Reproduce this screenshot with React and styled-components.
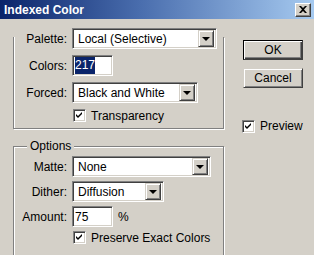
import React from "react";
import styled, { createGlobalStyle } from "styled-components";

const GlobalStyle = createGlobalStyle`
  html, body {
    margin: 0;
    padding: 0;
    background: #d4d0c8;
  }
`;

// 전체 창
const Window = styled.div`
  width: 314px;
  height: 255px;
  overflow: hidden;
  background: #d4d0c8;
  font-family: "Liberation Sans", Arial, sans-serif;
  font-size: 12px;
  color: #000;
`;

// 제목 표시줄
const TitleBar = styled.div`
  height: 19px;
  display: flex;
  align-items: center;
  justify-content: space-between;
  padding: 0 3px 0 4px;
  box-sizing: border-box;
  background: linear-gradient(to right, #0a246a 0%, #4a6eae 45%, #a6caf0 100%);
  color: #fff;
  font-weight: bold;
  font-size: 12px;
`;

const CloseButton = styled.div`
  width: 16px;
  height: 14px;
  box-sizing: border-box;
  background: #d4d0c8;
  border-top: 1px solid #fff;
  border-left: 1px solid #fff;
  border-right: 1px solid #404040;
  border-bottom: 1px solid #404040;
  box-shadow: inset -1px -1px 0 #808080;
  display: flex;
  align-items: center;
  justify-content: center;
`;

const Body = styled.div`
  display: flex;
  padding: 9px 0 0 13px;
`;

const LeftColumn = styled.div`
  width: 212px;
  display: flex;
  flex-direction: column;
  gap: 8px;
`;

// 그룹 상자 (테두리는 가상 요소로)
const Group = styled.div`
  position: relative;
  padding: ${(p) => p.$pad};

  &::before {
    content: "";
    position: absolute;
    top: ${(p) => p.$frameTop}px;
    left: 0;
    right: 1px;
    bottom: 1px;
    border: 1px solid #808080;
    border-top: ${(p) => (p.$noTop ? "none" : "1px solid #808080")};
    box-shadow: 1px 1px 0 #fff,
      inset 1px ${(p) => (p.$noTop ? "0" : "1px")} 0 #fff;
    pointer-events: none;
  }
`;

const Legend = styled.span`
  position: absolute;
  top: 0;
  left: 14px;
  padding: 0 3px;
  line-height: 16px;
  background: #d4d0c8;
  z-index: 1;
`;

const Form = styled.div`
  position: relative;
  display: grid;
  grid-template-columns: 54px auto;
  column-gap: 5px;
  row-gap: ${(p) => p.$gap}px;
  align-items: center;
`;

const Label = styled.label`
  text-align: right;
  white-space: nowrap;
`;

const Field = styled.div`
  display: flex;
  align-items: center;
  gap: 5px;
`;

// 움푹 들어간 상자
const Sunken = styled.div`
  width: ${(p) => p.$w}px;
  height: 21px;
  box-sizing: border-box;
  background: #fff;
  border-top: 1px solid #808080;
  border-left: 1px solid #808080;
  border-right: 1px solid #fff;
  border-bottom: 1px solid #fff;
  box-shadow: inset 1px 1px 0 #404040, inset -1px -1px 0 #d4d0c8;
  display: flex;
  align-items: center;
  padding: 2px;
`;

const SelectText = styled.span`
  flex: 1;
  padding-left: ${(p) => (p.$input ? 0 : 3)}px;
  white-space: nowrap;
  overflow: hidden;
`;

const Selected = styled.span`
  background: #0a246a;
  color: #fff;
  padding: 1px 0 2px;
`;

const DropButton = styled.div`
  width: 16px;
  height: 17px;
  box-sizing: border-box;
  background: #d4d0c8;
  border-top: 1px solid #d4d0c8;
  border-left: 1px solid #d4d0c8;
  border-right: 1px solid #404040;
  border-bottom: 1px solid #404040;
  box-shadow: inset 1px 1px 0 #fff, inset -1px -1px 0 #808080;
  display: flex;
  align-items: center;
  justify-content: center;

  &::after {
    content: "";
    border-left: 4px solid transparent;
    border-right: 4px solid transparent;
    border-top: 4px solid #000;
    margin-top: 1px;
  }
`;

const CheckRow = styled.div`
  grid-column: 2;
  display: flex;
  align-items: center;
  gap: 5px;
  height: 13px;
  white-space: nowrap;
`;

const CheckBox = styled.div`
  width: 13px;
  height: 13px;
  box-sizing: border-box;
  background: #fff;
  border-top: 1px solid #808080;
  border-left: 1px solid #808080;
  border-right: 1px solid #fff;
  border-bottom: 1px solid #fff;
  box-shadow: inset 1px 1px 0 #404040, inset -1px -1px 0 #d4d0c8;
  display: flex;
  align-items: center;
  justify-content: center;
  margin-left: 1px;
`;

const RightColumn = styled.div`
  margin-left: 18px;
  padding-top: 12px;
  display: flex;
  flex-direction: column;
`;

const Button = styled.div`
  width: 60px;
  height: 20px;
  box-sizing: border-box;
  display: flex;
  align-items: center;
  justify-content: center;
  background: #d4d0c8;
  border: 1px solid ${(p) => (p.$default ? "#000" : "#d4d0c8")};
  box-shadow: ${(p) =>
    p.$default
      ? "inset 1px 1px 0 #fff, inset -1px -1px 0 #404040, inset -2px -2px 0 #808080"
      : "inset 1px 1px 0 #fff, inset -1px -1px 0 #808080"};
  border-right-color: #404040;
  border-bottom-color: #404040;
  margin-bottom: 8px;
`;

const PreviewRow = styled.div`
  display: flex;
  align-items: center;
  gap: 5px;
  margin-top: 23px;
  margin-left: -2px;
`;

const Check = () => (
  <svg width="7" height="7" viewBox="0 0 7 7">
    <path d="M0 2 L2 4 L6 0 L6 2 L2 6 L0 4 Z" fill="#000" />
  </svg>
);

const Select = ({ width, value }) => (
  <Sunken $w={width}>
    <SelectText>{value}</SelectText>
    <DropButton />
  </Sunken>
);

const App = () => {
  return (
    <>
      <GlobalStyle />
      <Window>
        <TitleBar>
          <span>Indexed Color</span>
          <CloseButton>
            <svg width="8" height="7" viewBox="0 0 8 7">
              <path d="M0 0 L2 0 L4 2 L6 0 L8 0 L5 3.5 L8 7 L6 7 L4 5 L2 7 L0 7 L3 3.5 Z" fill="#000" />
            </svg>
          </CloseButton>
        </TitleBar>
        <Body>
          <LeftColumn>
            <Group $frameTop={9} $noTop $pad="0 0 8px 0">
              <Form $gap={6}>
                <Label>Palette:</Label>
                <Select width={145} value="Local (Selective)" />
                <Label>Colors:</Label>
                <Field>
                  <Sunken $w={41}>
                    <Selected>217</Selected>
                  </Sunken>
                </Field>
                <Label>Forced:</Label>
                <Select width={126} value="Black and White" />
                <CheckRow>
                  <CheckBox>
                    <Check />
                  </CheckBox>
                  Transparency
                </CheckRow>
              </Form>
            </Group>
            <Group $frameTop={8} $pad="18px 0 20px 0">
              <Legend>Options</Legend>
              <Form $gap={4}>
                <Label>Matte:</Label>
                <Select width={139} value="None" />
                <Label>Dither:</Label>
                <Select width={92} value="Diffusion" />
                <Label>Amount:</Label>
                <Field>
                  <Sunken $w={41}>
                    <SelectText $input>75</SelectText>
                  </Sunken>
                  %
                </Field>
                <CheckRow>
                  <CheckBox>
                    <Check />
                  </CheckBox>
                  Preserve Exact Colors
                </CheckRow>
              </Form>
            </Group>
          </LeftColumn>
          <RightColumn>
            <Button $default>OK</Button>
            <Button>Cancel</Button>
            <PreviewRow>
              <CheckBox>
                <Check />
              </CheckBox>
              Preview
            </PreviewRow>
          </RightColumn>
        </Body>
      </Window>
    </>
  );
};

export default App;
